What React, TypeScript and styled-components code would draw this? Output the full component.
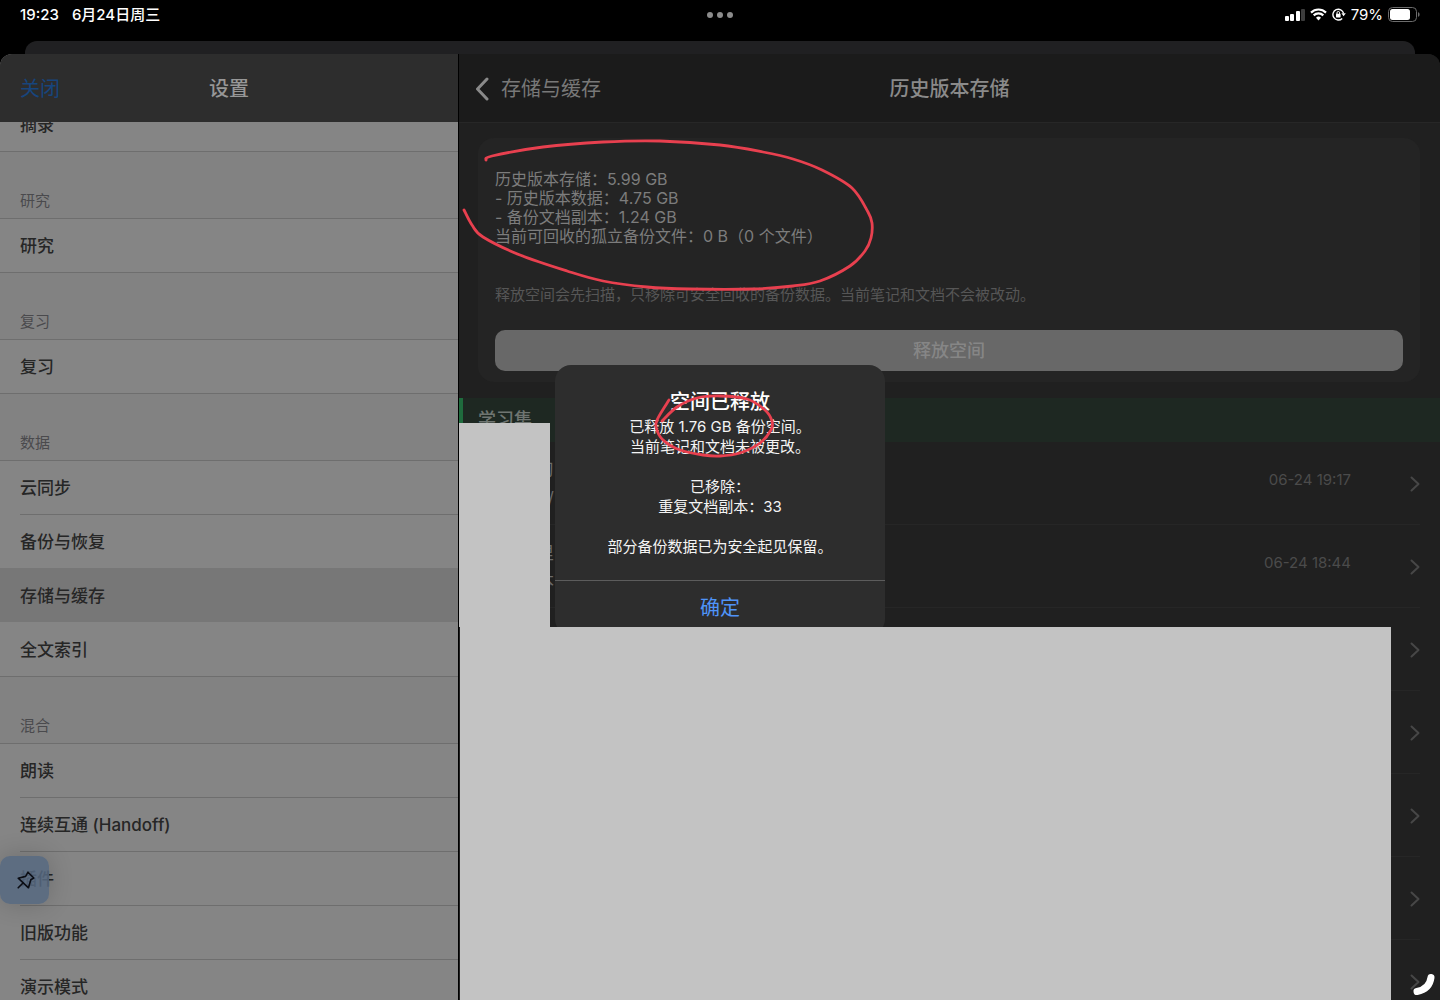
import React from "react";
import styled, { createGlobalStyle } from "styled-components";

const GlobalStyle = createGlobalStyle`
  *, *::before, *::after { box-sizing: border-box; }
  html, body, #root { height: 100%; }
  body {
    margin: 0;
    overflow: hidden;
    background: #000;
    font-family: Inter, "Noto Sans CJK SC", sans-serif;
  }
  button { font: inherit; border: 0; background: none; padding: 0; cursor: pointer; }
  h1, h2, p, ul { margin: 0; padding: 0; }
  ul { list-style: none; }
`;

const Screen = styled.div`
  height: 100vh;
  display: flex;
  flex-direction: column;
  position: relative;
  overflow: hidden;
  background: #000;
`;

const StatusBar = styled.header`
  flex: none;
  height: 41px;
  padding: 4px 20px 16px;
  display: grid;
  grid-template-columns: 1fr auto 1fr;
  align-items: center;
  color: #fff;
  font-size: 15px;
  line-height: 20px;
  font-weight: 500;
`;

const StatusLeft = styled.div`
  display: flex;
  gap: 13px;
`;

const StatusDots = styled.div`
  display: flex;
  gap: 4px;
`;

const Dot = styled.span`
  width: 6px;
  height: 6px;
  border-radius: 50%;
  background: #8c8c8c;
`;

const StatusRight = styled.div`
  display: flex;
  justify-content: flex-end;
  align-items: center;
  gap: 5px;
`;

const BackSheet = styled.div`
  flex: none;
  height: 13px;
  margin: 0 25px;
  border-radius: 12px 12px 0 0;
  background: #202022;
`;

const Sheet = styled.div`
  flex: 1;
  min-height: 0;
  display: flex;
  border-radius: 12px 12px 0 0;
  overflow: hidden;
  background: #202020;
`;

const Sidebar = styled.nav`
  flex: 0 0 459px;
  display: flex;
  flex-direction: column;
  border-right: 1px solid #000;
  background: #828282;
`;

const SideHeader = styled.div`
  flex: none;
  height: 68px;
  padding: 2px 20px 0;
  display: grid;
  grid-template-columns: 1fr auto 1fr;
  align-items: center;
  background: #2d2d2d;
  font-size: 20px;
  line-height: 28px;
`;

const CloseButton = styled.button`
  justify-self: start;
  color: #17457d;
`;

const Title = styled.h1<{ $dim?: boolean }>`
  font-size: 20px;
  line-height: 28px;
  font-weight: 500;
  color: ${(p) => (p.$dim ? "#8a8a8a" : "#979797")};
`;

const SideScroll = styled.div`
  flex: 1;
  min-height: 0;
  overflow: hidden;
`;

const SideContent = styled.div`
  margin-top: -24px;
`;

const GroupLabel = styled.h2`
  height: 68px;
  padding: 0 20px 6px;
  display: flex;
  align-items: flex-end;
  border-top: 1px solid #6e6e6e;
  border-bottom: 1px solid #6e6e6e;
  background: #828282;
  color: #4a4a4d;
  font-size: 15px;
  line-height: 22px;
  font-weight: 400;
`;

const SideItem = styled.li<{ $selected?: boolean; $plainTop?: boolean }>`
  background: ${(p) => (p.$selected ? "#777777" : "#858585")};
  &:not(:first-child)::before {
    content: "";
    display: block;
    height: 1px;
    margin-left: 20px;
    background: ${(p) => (p.$selected || p.$plainTop ? "transparent" : "#6e6e6e")};
  }
`;

const SideButton = styled.button`
  display: block;
  width: 100%;
  height: 53px;
  padding: 0 20px;
  text-align: left;
  color: #262626;
  font-size: 17px;
  line-height: 24px;
  font-weight: 500;
`;

const Detail = styled.main`
  flex: 1;
  min-width: 0;
  display: flex;
  flex-direction: column;
`;

const DetailHeader = styled.div`
  flex: none;
  height: 69px;
  padding: 2px 16px 0;
  display: grid;
  grid-template-columns: 1fr auto 1fr;
  align-items: center;
  background: #1b1b1b;
  border-bottom: 1px solid #272727;
  font-size: 20px;
  line-height: 28px;
`;

const BackButton = styled.button`
  justify-self: start;
  display: flex;
  align-items: center;
  gap: 11px;
  color: #787878;
`;

const Card = styled.section`
  flex: none;
  margin: 15px 20px 16px 19px;
  padding: 32px 17px 11px;
  border-radius: 16px;
  background: #242424;
`;

const Stats = styled.p`
  color: #7c7c7c;
  font-size: 16px;
  line-height: 19px;
`;

const Hint = styled.p`
  margin-top: 38px;
  color: #565656;
  font-size: 15px;
  line-height: 22px;
`;

const ReleaseButton = styled.button`
  display: block;
  width: 100%;
  height: 41px;
  margin-top: 24px;
  border-radius: 10px;
  background: #686868;
  color: #868686;
  font-size: 18px;
  line-height: 24px;
  font-weight: 500;
`;

const StudyBand = styled.h2`
  flex: none;
  height: 44px;
  padding-left: 15px;
  display: flex;
  align-items: center;
  border-left: 4px solid #1f6b3d;
  background: #1e2822;
  color: #6f7571;
  font-size: 18px;
  line-height: 24px;
  font-weight: 500;
`;

const VersionList = styled.ul`
  flex: none;
`;

const VersionRow = styled.li`
  height: 83px;
  padding: 12px 20px 12px 78px;
  display: flex;
  align-items: center;
  background: linear-gradient(#262626, #262626) 19px 100% / calc(100% - 39px) 1px no-repeat;
`;

const VersionText = styled.div`
  width: 17px;
  color: #6a6a6a;
  font-size: 17px;
  line-height: 28px;
  text-align: right;
  white-space: nowrap;
`;

const VersionDate = styled.time`
  margin-left: auto;
  margin-right: 59px;
  padding-bottom: 8px;
  color: #4b4b4b;
  font-size: 15px;
  line-height: 20px;
`;

const Chevron = styled.svg<{ $end?: boolean }>`
  flex: none;
  display: block;
  margin-left: ${(p) => (p.$end ? "auto" : "0")};
`;

const Overlay = styled.div`
  position: absolute;
  inset: 0;
  display: flex;
  align-items: center;
  justify-content: center;
`;

const Alert = styled.div`
  width: 330px;
  border-radius: 16px;
  background: #2d2d2d;
  text-align: center;
`;

const AlertBody = styled.div`
  padding: 22px 16px 23px;
`;

const AlertTitle = styled.h2`
  color: #fff;
  font-size: 20px;
  line-height: 30px;
  font-weight: 500;
`;

const AlertText = styled.p`
  color: #f4f4f4;
  font-size: 15px;
  line-height: 20px;
  white-space: pre-line;
`;

const AlertButton = styled.button`
  width: 100%;
  height: 55px;
  border-top: 1px solid #5c5c5c;
  color: #4f94f8;
  font-size: 20px;
  line-height: 28px;
`;

const MaskSide = styled.div`
  position: absolute;
  left: 459px;
  top: 423px;
  width: 91px;
  height: 204px;
  background: #c3c3c3;
`;

const MaskMain = styled.div`
  position: absolute;
  left: 460px;
  right: 49px;
  top: 627px;
  bottom: 0;
  background: #c3c3c3;
`;

const PinButton = styled.button`
  position: absolute;
  left: 0;
  top: 856px;
  width: 49px;
  height: 48px;
  padding-left: 2px;
  display: flex;
  align-items: center;
  justify-content: center;
  border-radius: 10px;
  background: rgba(86, 104, 128, 0.85);
  box-shadow: 0 0 24px rgba(0, 0, 0, 0.18);
`;

const Ink = styled.svg`
  position: absolute;
  left: 0;
  top: 0;
  pointer-events: none;
`;

const CornerArc = styled.svg`
  position: absolute;
  right: 4px;
  bottom: 3px;
`;

type Point = [number, number];

const statsStroke: Point[] = [
  [486, 160], [492, 156], [543, 147], [603, 142], [660, 141], [720, 145], [763, 152],
  [793, 159], [822, 170], [852, 188], [868, 212], [872, 223], [871, 238], [865, 251],
  [850, 266], [820, 281], [793, 286], [753, 289], [690, 289], [647, 287], [603, 281],
  [567, 271], [520, 255], [483, 237], [472, 225], [464, 210],
];

const alertStroke: Point[] = [
  [669, 400], [658, 418], [656, 427], [663, 440], [680, 450], [703, 455], [720, 456],
  [740, 453], [760, 443], [771, 430], [772, 421], [765, 410], [747, 399], [720, 396],
  [697, 398], [677, 407], [662, 421],
];

function smooth(points: Point[]): string {
  let d = `M${points[0][0]} ${points[0][1]}`;
  for (let i = 0; i < points.length - 1; i++) {
    const a = points[Math.max(i - 1, 0)];
    const b = points[i];
    const c = points[i + 1];
    const e = points[Math.min(i + 2, points.length - 1)];
    d += `C${b[0] + (c[0] - a[0]) / 6} ${b[1] + (c[1] - a[1]) / 6} ${c[0] - (e[0] - b[0]) / 6} ${c[1] - (e[1] - b[1]) / 6} ${c[0]} ${c[1]}`;
  }
  return d;
}

const groups = [
  { label: "研究", items: ["研究"] },
  { label: "复习", items: ["复习"] },
  { label: "数据", items: ["云同步", "备份与恢复", "存储与缓存", "全文索引"] },
  { label: "混合", items: ["朗读", "连续互通 (Handoff)", "插件", "旧版功能", "演示模式"] },
];

const selectedItem = "存储与缓存";

const versions: { title?: string; sub?: string; date?: string }[] = [
  { title: "习", sub: "/", date: "06-24 19:17" },
  { title: "里", sub: "本", date: "06-24 18:44" },
  {}, {}, {}, {}, {},
];

const SignalIcon = () => (
  <svg width="20" height="13" viewBox="0 0 20 13" aria-hidden="true">
    <rect x="0" y="8" width="4" height="5" rx="1" fill="#fff" />
    <rect x="5" y="6" width="4" height="7" rx="1" fill="#fff" />
    <rect x="11" y="3" width="4" height="10" rx="1" fill="#fff" />
    <rect x="16" y="1" width="4" height="12" rx="1" fill="#3c3c3c" />
  </svg>
);

const WifiIcon = () => (
  <svg width="17" height="13" viewBox="0 0 17 13" fill="none" stroke="#fff" strokeWidth="2.2" aria-hidden="true">
    <path d="M1 4.6a10.6 10.6 0 0 1 15 0" />
    <path d="M3.7 7.4a6.8 6.8 0 0 1 9.6 0" />
    <path d="M8.5 12.4 6 9.8a3.6 3.6 0 0 1 5 0z" fill="#fff" stroke="none" />
  </svg>
);

const LockIcon = () => (
  <svg width="14" height="13" viewBox="0 0 14 13" fill="none" stroke="#fff" strokeWidth="1.4" aria-hidden="true">
    <path d="M10.2 10.4A5.4 5.4 0 1 1 11.6 5.4" />
    <path d="M9.4 5.3h4.4L11.6 8.2z" fill="#fff" stroke="none" />
    <rect x="4" y="5.8" width="4.6" height="3.6" rx="0.6" fill="#fff" stroke="none" />
    <path d="M5 6V4.8a1.3 1.3 0 0 1 2.6 0V6" strokeWidth="1" />
  </svg>
);

const BatteryIcon = () => (
  <svg width="32" height="15" viewBox="0 0 32 15" aria-hidden="true">
    <rect x="0.5" y="0.5" width="28" height="14" rx="4" fill="none" stroke="#6c6c6c" />
    <rect x="2" y="2" width="20" height="11" rx="2.5" fill="#fff" />
    <path d="M30 5.2v4.6c1-.3 1.6-1.2 1.6-2.3S31 5.500 30 5.200z" fill="#6c6c6c" />
  </svg>
);

const BatteryLevel = styled.span`
  font-weight: 400;
`;

export default function App() {
  return (
    <>
      <GlobalStyle />
      <Screen>
        <StatusBar>
          <StatusLeft>
            <span>19:23</span>
            <span>6月24日周三</span>
          </StatusLeft>
          <StatusDots>
            <Dot />
            <Dot />
            <Dot />
          </StatusDots>
          <StatusRight>
            <SignalIcon />
            <WifiIcon />
            <LockIcon />
            <BatteryLevel>79%</BatteryLevel>
            <BatteryIcon />
          </StatusRight>
        </StatusBar>
        <BackSheet />
        <Sheet>
          <Sidebar>
            <SideHeader>
              <CloseButton>关闭</CloseButton>
              <Title>设置</Title>
            </SideHeader>
            <SideScroll>
              <SideContent>
                <ul>
                  <SideItem>
                    <SideButton>摘录</SideButton>
                  </SideItem>
                </ul>
                {groups.map((g) => (
                  <section key={g.label}>
                    <GroupLabel>{g.label}</GroupLabel>
                    <ul>
                      {g.items.map((item, i) => (
                        <SideItem key={item} $selected={item === selectedItem} $plainTop={g.items[i - 1] === selectedItem}>
                          <SideButton>{item}</SideButton>
                        </SideItem>
                      ))}
                    </ul>
                  </section>
                ))}
              </SideContent>
            </SideScroll>
          </Sidebar>
          <Detail>
            <DetailHeader>
              <BackButton>
                <svg width="15" height="24" viewBox="0 0 15 24" fill="none" stroke="#8a8a8a" strokeWidth="3" strokeLinecap="round" strokeLinejoin="round" aria-hidden="true">
                  <path d="M12 2 2.500 12 12 22" />
                </svg>
                存储与缓存
              </BackButton>
              <Title $dim>历史版本存储</Title>
            </DetailHeader>
            <Card>
              <Stats>
                历史版本存储：5.99 GB
                <br />- 历史版本数据：4.75 GB
                <br />- 备份文档副本：1.24 GB
                <br />
                当前可回收的孤立备份文件：0 B（0 个文件）
              </Stats>
              <Hint>释放空间会先扫描，只移除可安全回收的备份数据。当前笔记和文档不会被改动。</Hint>
              <ReleaseButton>释放空间</ReleaseButton>
            </Card>
            <StudyBand>学习集</StudyBand>
            <VersionList>
              {versions.map((v, i) => (
                <VersionRow key={i}>
                  {v.title && (
                    <VersionText>
                      <div>{v.title}</div>
                      <div>{v.sub}</div>
                    </VersionText>
                  )}
                  {v.date && <VersionDate>{v.date}</VersionDate>}
                  <Chevron $end={!v.date} width="10" height="16" viewBox="0 0 10 16" fill="none" stroke="#474747" strokeWidth="2" strokeLinecap="round" strokeLinejoin="round" aria-hidden="true">
                    <path d="M1.500 1.500 8.500 8 1.500 14.500" />
                  </Chevron>
                </VersionRow>
              ))}
            </VersionList>
          </Detail>
        </Sheet>
        <Overlay>
          <Alert role="alertdialog" aria-labelledby="alert-title">
            <AlertBody>
              <AlertTitle id="alert-title">空间已释放</AlertTitle>
              <AlertText>
                {"已释放 1.76 GB 备份空间。\n当前笔记和文档未被更改。\n\n已移除：\n重复文档副本：33\n\n部分备份数据已为安全起见保留。"}
              </AlertText>
            </AlertBody>
            <AlertButton>确定</AlertButton>
          </Alert>
        </Overlay>
        <MaskSide />
        <MaskMain />
        <PinButton aria-label="固定">
          <svg width="18" height="18" viewBox="0 0 18 18" fill="none" stroke="#0b0d14" strokeWidth="1.6" strokeLinejoin="round" strokeLinecap="round" aria-hidden="true">
            <path d="M11 1.200 16.800 7 13.800 8.700 11.500 16.800 1.200 7.200 8.600 5.400z" />
            <path d="M6 12 1.200 16.800" />
          </svg>
        </PinButton>
        <Ink width="1000" height="500" viewBox="0 0 1000 500" fill="none" stroke="#e8404f" strokeWidth="2.800" strokeLinecap="round" strokeLinejoin="round" aria-hidden="true">
          <path d={smooth(statsStroke)} />
          <path d={smooth(alertStroke)} />
        </Ink>
        <CornerArc width="24" height="24" viewBox="0 0 24 24" fill="none" stroke="#fff" strokeWidth="7" strokeLinecap="round" aria-hidden="true">
          <path d="M19 4.500C18 12 13 17 5 18.500" />
        </CornerArc>
      </Screen>
    </>
  );
}
